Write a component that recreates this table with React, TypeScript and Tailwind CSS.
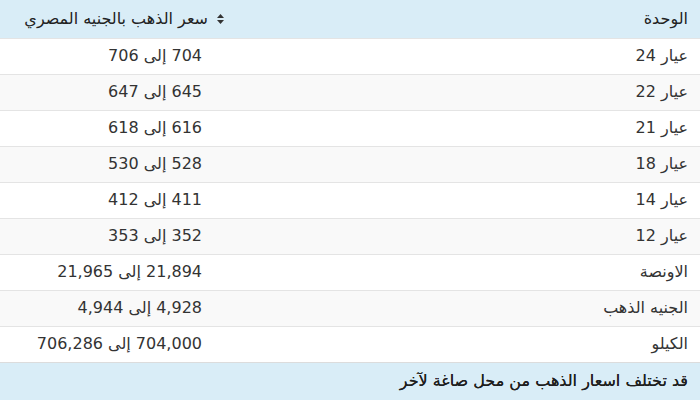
const rows: Array<{ unit: string; price: string }> = [
  { unit: 'عيار 24', price: '704 إلى 706' },
  { unit: 'عيار 22', price: '645 إلى 647' },
  { unit: 'عيار 21', price: '616 إلى 618' },
  { unit: 'عيار 18', price: '528 إلى 530' },
  { unit: 'عيار 14', price: '411 إلى 412' },
  { unit: 'عيار 12', price: '352 إلى 353' },
  { unit: 'الاونصة', price: '21,894 إلى 21,965' },
  { unit: 'الجنيه الذهب', price: '4,928 إلى 4,944' },
  { unit: 'الكيلو', price: '704,000 إلى 706,286' },
];

function SortIcon() {
  return (
    <svg width="7" height="10" viewBox="0 0 7 10" className="shrink-0">
      <path d="M3.5 0 L7 4 L0 4 Z" fill="#333" />
      <path d="M0 6 L7 6 L3.5 10 Z" fill="#333" />
    </svg>
  );
}

export default function App() {
  return (
    <div
      dir="rtl"
      className="w-[700px] h-[400px] overflow-hidden bg-white text-[16px] text-[#333]"
      style={{ fontFamily: '"DejaVu Sans", sans-serif' }}
    >
      <table className="w-full border-collapse">
        <thead>
          <tr className="h-[38px] bg-[#d9edf7] text-[#222]">
            <th className="w-[468px] pr-3 text-right font-normal whitespace-nowrap">الوحدة</th>
            <th className="pr-2 text-right font-normal whitespace-nowrap">
              <div className="flex items-center gap-[9px]">
                <SortIcon />
                <span>سعر الذهب بالجنيه المصري</span>
              </div>
            </th>
          </tr>
        </thead>
        <tbody>
          {rows.map((row, i) => (
            <tr
              key={row.unit}
              className={
                i % 2 === 1
                  ? 'h-[36px] border-t border-[#e4e4e4] bg-[#f9f9f9]'
                  : 'h-[36px] border-t border-[#e4e4e4] bg-white'
              }
            >
              <td className="pr-3 text-right whitespace-nowrap">{row.unit}</td>
              <td className="pr-[30px] text-right whitespace-nowrap">{row.price}</td>
            </tr>
          ))}
          <tr className="h-[38px] border-t border-[#dcdcdc] bg-[#d9edf7]">
            <td colSpan={2} className="pr-3 text-right whitespace-nowrap text-[#1f1f1f] [text-shadow:0_0_0.5px_#1f1f1f]">
              قد تختلف اسعار الذهب من محل صاغة لآخر
            </td>
          </tr>
        </tbody>
      </table>
    </div>
  );
}
